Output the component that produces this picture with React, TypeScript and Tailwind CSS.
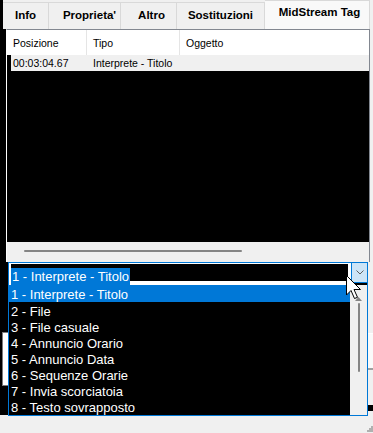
import React from "react";

const items = [
  "1 - Interprete - Titolo",
  "2 - File",
  "3 - File casuale",
  "4 - Annuncio Orario",
  "5 - Annuncio Data",
  "6 - Sequenze Orarie",
  "7 - Invia scorciatoia",
  "8 - Testo sovrapposto",
];

const tabs = [
  { label: "Info", cls: "w-[46px]" },
  { label: "Proprieta'", cls: "w-[72px] pl-[10px]" },
  { label: "Altro", cls: "w-[56px] pl-[6px]" },
  { label: "Sostituzioni", cls: "w-[88px]" },
];

function Tabs() {
  return (
    <div className="ml-[3px] flex h-[29px] bg-[#f0f0f0]">
      {tabs.map((t) => (
        <div
          key={t.label}
          className={`mt-[2px] flex h-[27px] items-center justify-center border-r border-t border-[#d9d9d9] text-[11.5px] font-bold ${t.cls}`}
        >
          {t.label}
        </div>
      ))}
      {/* selected tab */}
      <div className="flex h-[29px] w-[105px] items-center justify-center border-r border-t border-[#d9d9d9] bg-[#f9f9f9] pb-[4px] pl-[5px] text-[11.5px] font-bold">
        MidStream Tag
      </div>
    </div>
  );
}

function ListView() {
  return (
    <div className="flex w-[364px] flex-col border-l border-r border-t border-l-white border-r-[#828790] border-t-[#828790]">
      <div className="flex h-[25px] bg-white text-[10.5px]">
        <div className="flex w-[80px] items-center border-r border-[#e5e5e5] pl-[6px] pt-[2px]">Posizione</div>
        <div className="flex w-[93px] items-center border-r border-[#e5e5e5] pl-[6px] pt-[2px]">Tipo</div>
        <div className="flex flex-1 items-center pl-[6px] pt-[2px]">Oggetto</div>
      </div>
      <div className="flex h-[16px] text-[10.5px]">
        <div className="w-[4px] bg-black" />
        <div className="flex flex-1 items-center bg-[#f0f0f0] pt-[1px]">
          <span className="w-[82px] pl-[2px]">00:03:04.67</span>
          <span>Interprete - Titolo</span>
        </div>
      </div>
      <div className="flex-1 bg-black" />
      <div className="h-[20px] bg-[#f0f0f0] pl-[17px] pt-[8px]">
        <div className="h-[2px] w-[218px] rounded-full bg-[#858585]" />
      </div>
    </div>
  );
}

function Combo() {
  return (
    <div className="flex w-[360px] border-l border-r border-t border-[#0078d7]">
      <div className="w-[342px] bg-white pb-[4px] pl-[2px] pr-[3px] pt-[1px]">
        <div className="h-[17px] bg-black">
          <span className="inline-block h-[17px] bg-[#0078d7] pl-[1px] pr-[1px] text-[13px] leading-[18px] text-white">
            1 - Interprete - Titolo
          </span>
        </div>
      </div>
      <div className="w-px bg-[#0078d7]" />
      <div className="flex h-[20px] w-[15px] items-center justify-center border-b border-[#0078d7] bg-[#cce4f7]">
        <svg width="8" height="5" viewBox="0 0 8 5">
          <path d="M0.5 0.5 L4 4 L7.5 0.5" fill="none" stroke="#606060" strokeWidth="1" />
        </svg>
      </div>
    </div>
  );
}

function Dropdown() {
  return (
    <div className="absolute left-[8px] top-0 flex h-[131px] w-[360px] border-b border-l border-r border-[#0078d7]">
      <div className="flex w-[341px] flex-col bg-black text-[13px] text-white">
        {items.map((it, i) => (
          <div
            key={it}
            className={
              i === 0
                ? "h-[17px] bg-[#0078d7] pl-[2px] leading-[19px]"
                : "h-[16px] pl-[2px] leading-[19px]"
            }
          >
            {it}
          </div>
        ))}
      </div>
      <div className="relative flex-1 bg-[#f0f0f0]">
        <svg className="absolute left-[5px] top-[11px]" width="7" height="5" viewBox="0 0 7 5">
          <path d="M0 5 L3.5 1 L7 5 Z" fill="#858585" />
        </svg>
        <div className="ml-[8px] mt-[18px] h-[69px] w-[2px] rounded-full bg-[#858585]" />
      </div>
    </div>
  );
}

export default function App() {
  return (
    <div className="relative h-[433px] w-[373px] overflow-hidden bg-black font-['Liberation_Sans',Arial,sans-serif] text-black">
      <Tabs />

      <div className="flex h-[233px]">
        <div className="w-[6px] bg-black" />
        <ListView />
        <div className="flex-1 bg-[#f0f0f0]" />
      </div>

      <div className="flex h-[23px]">
        <div className="w-[8px] bg-black" />
        <Combo />
        <div className="flex-1 bg-[#f0f0f0]" />
      </div>

      <div className="relative h-[148px]">
        {/* window content behind the open list */}
        <div className="flex h-[130px]">
          <div className="w-[8px] bg-black pt-[47px]">
            <div className="ml-[2px] h-[54px] border border-r-0 border-[#7a7a7a] bg-white" />
          </div>
          <div className="flex-1 bg-black" />
          <div className="flex w-[5px] flex-col bg-[#f0f0f0]">
            <div className="h-[48px]" />
            <div className="h-[35px] border-t border-white bg-[#fafafa]" />
            <div className="h-[2px] bg-[#a0a0a0]" />
            <div className="h-[35px]" />
            <div className="h-[6px] bg-black" />
          </div>
        </div>
        <div className="flex h-[18px] justify-end bg-[#f0f0f0] pb-[1px]">
          <svg className="mt-auto" width="6" height="6" viewBox="0 0 6 6">
            <rect x="4" y="0" width="2" height="2" fill="#b0b0b0" />
            <rect x="2" y="2" width="2" height="2" fill="#b0b0b0" />
            <rect x="4" y="2" width="2" height="2" fill="#b0b0b0" />
            <rect x="0" y="4" width="2" height="2" fill="#b0b0b0" />
            <rect x="2" y="4" width="2" height="2" fill="#b0b0b0" />
            <rect x="4" y="4" width="2" height="2" fill="#b0b0b0" />
          </svg>
        </div>
        <Dropdown />
      </div>

      {/* mouse pointer */}
      <svg className="absolute left-[346px] top-[275px]" width="17" height="26" viewBox="0 0 17 26">
        <path
          d="M0.5 0.5 L0.5 20 L5 15.5 L8.5 23.5 L11.5 22.3 L8 14.5 L14.5 14.5 Z"
          fill="white"
          stroke="black"
          strokeWidth="1"
          strokeLinejoin="round"
        />
      </svg>
    </div>
  );
}
